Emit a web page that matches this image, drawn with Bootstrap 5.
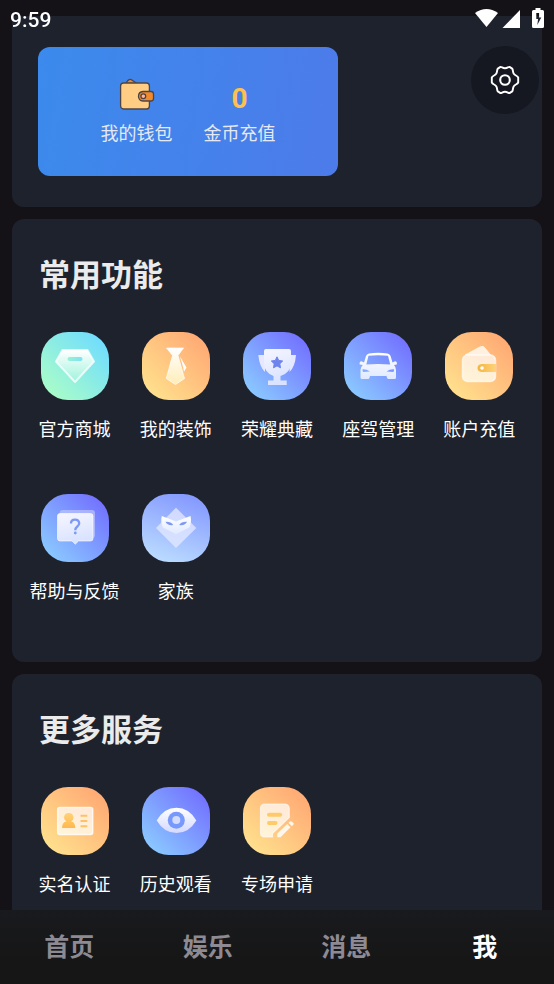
<!DOCTYPE html>
<html lang="zh-CN">
<head>
<meta charset="utf-8">
<meta name="viewport" content="width=device-width, initial-scale=1">
<title>我</title>
<link href="https://cdn.jsdelivr.net/npm/bootstrap@5.3.0/dist/css/bootstrap.min.css" rel="stylesheet">
<style>
  body { background: #141117; color: #fff; font-family: "Noto Sans CJK SC", sans-serif; overflow: hidden; }
  a { color: inherit; text-decoration: none; }
  .status-bar { color: #fff; padding: 8px 10px; font: 500 21px/24px Roboto, sans-serif; }
  .page-body { padding: 16px 12px 0; display: grid; gap: 12px; }
  .panel { background: #1e222d; border-radius: 12px; padding: 31px 12px; }
  .panel-top { border-radius: 0 0 12px 12px; padding: 30px 3px 31px 26px; }
  .wallet { width: 300px; height: 129px; margin-top: 1px; border-radius: 12px; gap: 31px; padding-top: 27px; background: linear-gradient(100deg, #3b8aec, #4d7bea); color: #e6e9f2; font-size: 18px; line-height: 27px; }
  .coin { font: 700 28px/41px Roboto, sans-serif; color: #ffc04d; height: 37px; padding-top: 4px; }
  .wallet-art { height: 37px; }
  .settings { width: 68px; height: 68px; background: #151820; color: #fff; }
  .panel h2 { font-size: 31px; line-height: 46px; font-weight: 700; color: #ebebeb; margin: 0 0 36px 15px; }
  .tiles { row-gap: 52px; }
  .tile { font-size: 18px; line-height: 27px; white-space: nowrap; gap: 15px; }
  .panel-tall { padding-bottom: 58px; }
  .tile-icon { width: 68px; height: 68px; border-radius: 27px; }
  .mint { background: linear-gradient(45deg, #adffc5 5%, #6fdcff 92%); }
  .orange { background: linear-gradient(45deg, #ffe28e 8%, #ffa873 92%); }
  .blue { background: linear-gradient(45deg, #8bcbff 8%, #726fff 92%); }
  .pale { background: linear-gradient(20deg, #bbdcff 8%, #8498ff 92%); }
  .tab-bar { background: linear-gradient(#191a1e, #161616 70%); min-height: 74px; padding-bottom: 4px; font-size: 25px; line-height: 38px; font-weight: 700; color: #8e8a93; }
  .tab-bar .current { color: #fff; }
</style>
<script src="https://cdn.jsdelivr.net/npm/bootstrap@5.3.0/dist/js/bootstrap.bundle.min.js"></script>
</head>
<body>
<svg width="0" height="0" class="position-absolute" aria-hidden="true">
  <defs>
    <linearGradient id="gMint" x1="0" y1="0" x2="0" y2="1"><stop offset="0" stop-color="#fff"/><stop offset="1" stop-color="#9df3dc"/></linearGradient>
    <linearGradient id="gSlot"><stop offset="0" stop-color="#97f2d6"/><stop offset="1" stop-color="#7de2f2"/></linearGradient>
    <linearGradient id="gWarm" x1="0" y1="0" x2="0" y2="1"><stop offset="0" stop-color="#fff"/><stop offset="1" stop-color="#ffedb8"/></linearGradient>
    <linearGradient id="gCream" x1="0.2" y1="1" x2="0.7" y2="0"><stop offset="0" stop-color="#fff4d8"/><stop offset="1" stop-color="#ffead8"/></linearGradient>
    <linearGradient id="gGold"><stop offset="0" stop-color="#f3b63f"/><stop offset="1" stop-color="#ffd27c"/></linearGradient>
    <linearGradient id="gAmber" x1="0" y1="0" x2="0" y2="1"><stop offset="0" stop-color="#ffd277"/><stop offset="1" stop-color="#ffb84d"/></linearGradient>
    <linearGradient id="gCool" x1="0" y1="0" x2="0.3" y2="1"><stop offset="0" stop-color="#f6f6ff"/><stop offset="1" stop-color="#d9e3ff"/></linearGradient>
    <linearGradient id="gFade" x1="0" y1="0" x2="0" y2="1"><stop offset="0" stop-color="#fff"/><stop offset="1" stop-color="#d4d9ff"/></linearGradient>
    <linearGradient id="gMask" x1="0" y1="0" x2="0" y2="1"><stop offset="0" stop-color="#fff"/><stop offset="1" stop-color="#dfe9ff"/></linearGradient>
  </defs>
</svg>

<header class="status-bar fixed-top d-flex justify-content-between align-items-start">
  <span>9:59</span>
  <svg width="70" height="22" viewBox="0 0 70 22" fill="#fff" aria-hidden="true">
    <path d="M1 5Q12.500-3 24 5L12.500 19Z"/>
    <path d="M46 2V20H28.500Z"/>
    <path fill-rule="evenodd" d="M61.500 0h5v2h2q1.500 0 1.500 1.500v15q0 1.500-1.500 1.500h-9q-1.500 0-1.500-1.500v-15q0-1.500 1.500-1.500h2zM62.300 5v6h1.800l-.8 6 4-7.500h-2.200V5z"/>
  </svg>
</header>

<main class="page-body">
  <section class="panel-top panel d-flex justify-content-between align-items-start">
    <div class="wallet d-flex justify-content-center">
      <a href="#" class="d-flex flex-column align-items-center gap-2">
        <span class="wallet-art">
          <svg class="d-block" width="36" height="37" viewBox="0 0 36 37" stroke="#4c4544" stroke-width="1.300" stroke-linejoin="round" aria-hidden="true">
            <path d="M7 9.500q2-4.500 5-4l6 4z" fill="#f18a2e"/>
            <rect x="1.600" y="9" width="28.800" height="26" rx="3" fill="#ffcd84"/>
            <path d="M24 17.500h8q2.500 0 2.500 2.500v4.500q0 2.500-2.500 2.500h-8q-4.500-.5-4.500-4.800T24 17.500z" fill="#f18a2e"/>
            <circle cx="24.300" cy="22.200" r="2.400" fill="#ffb39b"/>
          </svg>
        </span>
        <span>我的钱包</span>
      </a>
      <a href="#" class="d-flex flex-column align-items-center gap-2">
        <span class="coin">0</span>
        <span>金币充值</span>
      </a>
    </div>
    <button type="button" class="settings btn border-0 rounded-circle p-0 d-flex align-items-center justify-content-center" aria-label="设置">
      <svg width="32" height="32" viewBox="0 0 32 32" fill="none" stroke="#fff" stroke-width="1.900" stroke-linejoin="round" aria-hidden="true">
        <path d="M11.500 2.900C13 2.900 13.500 4.200 16 4.200S19 2.900 20.500 2.900L23.200 4.600C24.200 6 23.600 8 24.800 9.800S28.300 11.500 29.200 13.500V18.500C28.300 20.500 26 20.400 24.800 22.200S24.200 26 23.200 27.400L20.500 29.100C19 29.100 18.500 27.800 16 27.800S13 29.100 11.500 29.100L8.800 27.400C7.800 26 8.400 24 7.200 22.200S3.700 20.500 2.800 18.500V13.500C3.700 11.500 6 11.600 7.200 9.800S7.800 6 8.800 4.600Z"/>
        <circle cx="16" cy="16" r="4.800" stroke-width="2.100"/>
      </svg>
    </button>
  </section>

  <section class="panel panel-tall">
    <h2>常用功能</h2>
    <div class="tiles row row-cols-5 gx-0">
      <a href="#" class="tile col d-flex flex-column align-items-center">
        <svg class="tile-icon mint" viewBox="0 0 68 68" aria-hidden="true">
          <path d="M21.500 18H46.500L53 29.500 34 50 15 29.500Z" fill="url(#gMint)" stroke="#fff" stroke-opacity=".75" stroke-width="2" stroke-linejoin="round"/>
          <rect x="26.500" y="25" width="15" height="4" rx="2" fill="url(#gSlot)"/>
        </svg>
        <span>官方商城</span>
      </a>
      <a href="#" class="tile col d-flex flex-column align-items-center">
        <svg class="tile-icon orange" viewBox="0 0 68 68" aria-hidden="true">
          <path d="M24.500 16H41.500L36 23.500 42.500 46.500 33.500 52.500 24.300 46.500 30.500 23.500Z" fill="url(#gWarm)" stroke="#fff" stroke-opacity=".7" stroke-linejoin="round"/>
          <path d="M38 24.500L44.500 35.500 42 39.800 41.200 35.500Z" fill="#fff"/>
        </svg>
        <span>我的装饰</span>
      </a>
      <a href="#" class="tile col d-flex flex-column align-items-center">
        <svg class="tile-icon blue" viewBox="0 0 68 68" aria-hidden="true">
          <path d="M15.300 23H22V40Q16.500 35 15.300 23ZM53 23H46.500V40Q52 35 53 23Z" fill="#e5e8ff"/>
          <path d="M23 17H46Q48 17 48 19V31Q47.500 41 37.500 44V48.500H43.700V53H25V48.500H30.500V44Q21.500 41 21 31V19Q21 17 23 17Z" fill="url(#gCool)"/>
          <path d="M34 24.800l1.700 3.600 4 .6-2.900 2.800.7 4-3.500-1.900-3.500 1.900.7-4-2.900-2.800 4-.6z" fill="#6e83ed" stroke="#6e83ed" stroke-linejoin="round"/>
        </svg>
        <span>荣耀典藏</span>
      </a>
      <a href="#" class="tile col d-flex flex-column align-items-center">
        <svg class="tile-icon blue" viewBox="0 0 68 68" aria-hidden="true">
          <path fill-rule="evenodd" fill="url(#gMask)" d="M25 21.500Q34 20 43.500 21.500 46 22 46.600 24L48.500 30.500 51 29.200Q53.500 29.500 52.800 32.500L50 33Q52 35 52 38V45.500Q52 47 50.500 47H44Q43 47 42.500 44H26Q25.500 47 24.500 47H18Q16.500 47 16.500 45.500V38Q16.500 35 18.800 33L15.700 32.500Q15 29.500 17.500 29.200L20 30.500 22 24Q22.600 22 25 21.500ZM24.500 23.800L22.300 32.500Q34 31.400 46.200 32.500L44 23.800Q34 22.600 24.500 23.800ZM18.300 37.400L19 40 26 39.600Q22 37 18.300 37.400ZM50.200 37.400Q46 37 42.500 39.600L49.500 40Z"/>
        </svg>
        <span>座驾管理</span>
      </a>
      <a href="#" class="tile col d-flex flex-column align-items-center">
        <svg class="tile-icon orange" viewBox="0 0 68 68" aria-hidden="true">
          <path d="M20 23L35 14.800Q38.500 13 40.500 16.500L46 23.500Z" fill="#fff0df" stroke="#fff" stroke-opacity=".5"/>
          <rect x="17.500" y="23" width="33" height="26.500" rx="5" fill="url(#gCream)" stroke="#fff" stroke-opacity=".65" stroke-width="1.500"/>
          <path d="M36.500 32H51V40H36.500Q32.500 39.500 32.500 36T36.500 32Z" fill="url(#gGold)"/>
          <circle cx="37" cy="36" r="1.800" fill="#fff"/>
        </svg>
        <span>账户充值</span>
      </a>
      <a href="#" class="tile col d-flex flex-column align-items-center">
        <svg class="tile-icon blue" viewBox="0 0 68 68" aria-hidden="true">
          <rect x="18.700" y="16" width="35.300" height="28" rx="3" fill="#c9ceff" opacity=".6"/>
          <path d="M19 19.500H49.500Q52 19.500 52 22V44.500Q52 47 49.500 47H37.500L34.300 50.200 31 47H19Q16.500 47 16.500 44.500V22Q16.500 19.500 19 19.500Z" fill="url(#gCool)" stroke="#fff" stroke-opacity=".6"/>
          <path d="M30 29.500Q30 25.600 34 25.600T38.200 29.300Q38.200 31 36.300 32.500T34.300 36.300" fill="none" stroke="#7d98f5" stroke-width="2.300"/>
          <circle cx="34.300" cy="39" r="1.400" fill="#7d98f5"/>
        </svg>
        <span>帮助与反馈</span>
      </a>
      <a href="#" class="tile col d-flex flex-column align-items-center">
        <svg class="tile-icon pale" viewBox="0 0 68 68" aria-hidden="true">
          <path d="M34 13.700L54.300 34 34 54 14 34Z" fill="#e3e8ff" opacity=".78"/>
          <path d="M19.800 22L29 25.500 34 27.500 39.300 25.500 48.500 22Q50 28 47.300 33.500L34 40.200 21 33.500Q18.300 28 19.800 22Z" fill="url(#gMask)"/>
          <path d="M23.500 27.800Q29 27.500 31.200 31Q25.500 32 23.500 27.800ZM45 27.800Q39.500 27.500 37.200 31Q43 32 45 27.800Z" fill="#7e98f4"/>
        </svg>
        <span>家族</span>
      </a>
    </div>
  </section>

  <section class="panel">
    <h2>更多服务</h2>
    <div class="tiles row row-cols-5 gx-0">
      <a href="#" class="tile col d-flex flex-column align-items-center">
        <svg class="tile-icon orange" viewBox="0 0 68 68" aria-hidden="true">
          <rect x="16.700" y="20.500" width="35" height="27" rx="2" fill="url(#gCream)" stroke="#fff" stroke-opacity=".8" stroke-width="1.500"/>
          <path d="M27.700 26A4.400 4.400 0 0 1 30 34.300Q34.300 35.500 34.300 41H21Q21 35.500 25.500 34.300A4.400 4.400 0 0 1 27.700 26Z" fill="url(#gAmber)"/>
          <path d="M39.500 28.800H46.300M39.500 34H46.300M39.500 39.200H46.300" stroke="#ffc168" stroke-width="2"/>
        </svg>
        <span>实名认证</span>
      </a>
      <a href="#" class="tile col d-flex flex-column align-items-center">
        <svg class="tile-icon blue" viewBox="0 0 68 68" aria-hidden="true">
          <path d="M14.700 33.500Q22 20.800 34.500 20.800T54.300 33.500Q47 46 34.500 46T14.700 33.500Z" fill="url(#gFade)"/>
          <circle cx="34.300" cy="33.300" r="8.500" fill="#7799fb"/>
          <circle cx="34.300" cy="33" r="4" fill="#d3dcff"/>
        </svg>
        <span>历史观看</span>
      </a>
      <a href="#" class="tile col d-flex flex-column align-items-center">
        <svg class="tile-icon orange" viewBox="0 0 68 68" aria-hidden="true">
          <path d="M21 17H42Q46.300 17.500 46.300 22V30.500L29.500 46.500V50H21Q17.500 49.500 17.500 46V21Q17.500 17.500 21 17Z" fill="url(#gCream)" stroke="#fff" stroke-opacity=".6" stroke-width="1.200"/>
          <path d="M26 27.700H37.200M26 36H32.500" stroke="#ffca69" stroke-width="4" stroke-linecap="round"/>
          <path d="M34.300 46.500L44.300 37 47.500 40.200 37.500 50.200H34.300Z" fill="#fff6ea"/>
          <path d="M45.500 35.800L47 34.500Q48 33.800 49 34.700L50.400 36.200Q51 37.200 50.200 38L48.800 39.300Z" fill="#fff6ea"/>
        </svg>
        <span>专场申请</span>
      </a>
    </div>
  </section>
</main>

<nav class="tab-bar fixed-bottom d-flex align-items-center text-center">
  <a href="#" class="flex-fill w-25">首页</a>
  <a href="#" class="flex-fill w-25">娱乐</a>
  <a href="#" class="flex-fill w-25">消息</a>
  <a href="#" class="current flex-fill w-25" aria-current="page">我</a>
</nav>
</body>
</html>
